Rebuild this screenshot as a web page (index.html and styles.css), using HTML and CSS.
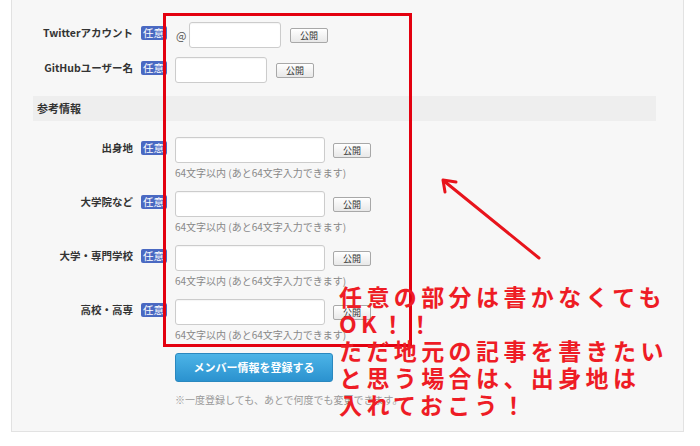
FILE: index.html
```html
<!DOCTYPE html>
<html lang="ja">
<head>
<meta charset="utf-8">
<title>メンバー情報</title>
<link rel="stylesheet" href="styles.css">
</head>
<body>
<div class="page">
  <div class="panel">
    <div class="row">
      <div class="label">Twitterアカウント</div>
      <span class="badge">任意</span>
      <div class="field">
        <div class="line">
          <span class="at">@</span>
          <span class="input short"></span>
          <span class="pub">公開</span>
        </div>
      </div>
    </div>
    <div class="row gh">
      <div class="label">GitHubユーザー名</div>
      <span class="badge">任意</span>
      <div class="field">
        <div class="line">
          <span class="input short"></span>
          <span class="pub">公開</span>
        </div>
      </div>
    </div>

    <div class="section">参考情報</div>

    <div class="row ref">
      <div class="label">出身地</div>
      <span class="badge">任意</span>
      <div class="field">
        <div class="line">
          <span class="input long"></span>
          <span class="pub">公開</span>
        </div>
        <div class="help">64文字以内 (あと64文字入力できます)</div>
      </div>
    </div>
    <div class="row ref">
      <div class="label">大学院など</div>
      <span class="badge">任意</span>
      <div class="field">
        <div class="line">
          <span class="input long"></span>
          <span class="pub">公開</span>
        </div>
        <div class="help">64文字以内 (あと64文字入力できます)</div>
      </div>
    </div>
    <div class="row ref">
      <div class="label">大学・専門学校</div>
      <span class="badge">任意</span>
      <div class="field">
        <div class="line">
          <span class="input long"></span>
          <span class="pub">公開</span>
        </div>
        <div class="help">64文字以内 (あと64文字入力できます)</div>
      </div>
    </div>
    <div class="row ref last">
      <div class="label">高校・高専</div>
      <span class="badge">任意</span>
      <div class="field">
        <div class="line">
          <span class="input long"></span>
          <span class="pub">公開</span>
        </div>
        <div class="help">64文字以内 (あと64文字入力できます)</div>
      </div>
    </div>

    <div class="actions">
      <div class="submit">メンバー情報を登録する</div>
      <div class="note">※一度登録しても、あとで何度でも変更できます。</div>
    </div>
  </div>

  <div class="annot-rect"></div>
  <svg class="arrow" width="700" height="446" viewBox="0 0 700 446">
    <line x1="539" y1="258" x2="444" y2="181" class="arrow-line"/>
    <polyline points="456,182 443,180 445,192" class="arrow-head"/>
  </svg>
  <div class="annot-text">任意の部分は書かなくても<br>OK！！<br>ただ地元の記事を書きたい<br>と思う場合は、出身地は<br>入れておこう！</div>
</div>
</body>
</html>
```

FILE: styles.css
```css
* { box-sizing: border-box; }

html, body {
  margin: 0;
  padding: 0;
  background: #ffffff;
}

body {
  font-family: "Noto Sans CJK JP", "Noto Sans", sans-serif;
  color: #333;
}

.page {
  position: relative;
  width: 700px;
  height: 446px;
  overflow: hidden;
}

.panel {
  margin-left: 11px;
  width: 673px;
  background: #f7f7f7;
  border: 1px solid #e2e2e2;
  border-top: none;
  padding: 22px 27px 24px 21px;
}

.row {
  display: flex;
  align-items: flex-start;
}

.row.gh { margin-top: 9px; }

.label {
  width: 100px;
  margin-right: 8px;
  text-align: right;
  font-size: 10.5px;
  font-weight: 700;
  line-height: 22px;
  color: #333;
  white-space: nowrap;
}

.badge {
  width: 26px;
  height: 14px;
  margin-top: 4px;
  margin-right: 8px;
  padding-left: 2px;
  background: #4a69c2;
  border-radius: 2px;
  color: #fff;
  font-size: 10.5px;
  line-height: 14px;
  white-space: nowrap;
  overflow: hidden;
}

.field {
  display: flex;
  flex-direction: column;
}

.line {
  display: flex;
  align-items: center;
  height: 26px;
}

.at {
  width: 14px;
  padding-left: 1px;
  font-size: 11px;
  color: #555;
}

.input {
  display: block;
  height: 26px;
  background: #fff;
  border: 1px solid #cccccc;
  border-radius: 3px;
  box-shadow: inset 0 1px 1px rgba(0,0,0,0.04);
}

.input.short { width: 92px; }
.input.long { width: 150px; }

.pub {
  display: block;
  width: 38px;
  height: 15px;
  margin-left: 9px;
  border: 1px solid #a8a8a8;
  border-radius: 2px;
  background: linear-gradient(#ffffff, #e8e8e8);
  font-size: 9px;
  line-height: 13px;
  text-align: center;
  color: #333;
}

.ref .pub { margin-left: 8px; }

.help {
  margin-top: 3px;
  font-size: 10px;
  line-height: 14px;
  color: #888;
  white-space: nowrap;
}

.section {
  margin: 13px 0 16px;
  height: 25px;
  background: #eeeeee;
  padding-left: 4px;
  font-size: 11px;
  font-weight: 700;
  line-height: 25px;
  color: #333;
}

.row.ref { margin-bottom: 11px; }
.row.ref.last { margin-bottom: 0; }

.actions {
  padding-left: 142px;
  margin-top: 11px;
}

.submit {
  width: 158px;
  height: 29px;
  border: 1px solid #2a88bf;
  border-radius: 3px;
  background: linear-gradient(#4cb4e7, #2b92cf);
  color: #fff;
  font-size: 11px;
  font-weight: 700;
  line-height: 27px;
  text-align: center;
}

.note {
  margin-top: 11px;
  font-size: 10px;
  line-height: 14px;
  color: #999;
  white-space: nowrap;
}

.annot-rect {
  position: absolute;
  left: 163px;
  top: 13px;
  width: 249px;
  height: 334px;
  border: 3px solid #e3000f;
}

.arrow {
  position: absolute;
  left: 0;
  top: 0;
}

.arrow-line,
.arrow-head {
  stroke: #e8141c;
  stroke-width: 3;
  stroke-linecap: round;
  stroke-linejoin: round;
  fill: none;
}

.annot-text {
  position: absolute;
  left: 339px;
  top: 283px;
  font-size: 23px;
  font-weight: 700;
  line-height: 27px;
  letter-spacing: 4.4px;
  color: #ee1c25;
  white-space: nowrap;
}
```
